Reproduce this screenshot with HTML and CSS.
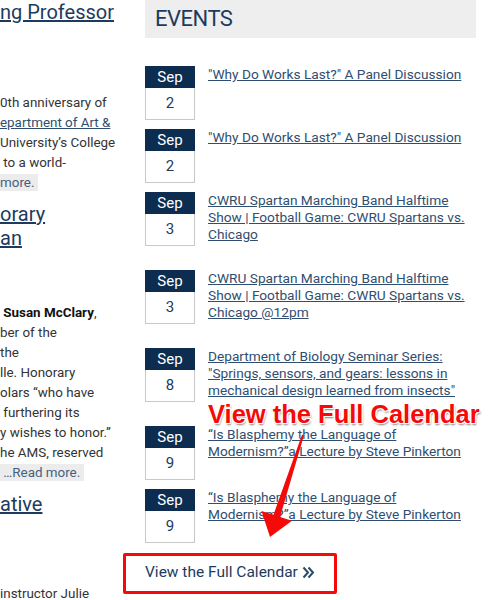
FILE: index.html
```html
<!DOCTYPE html>
<html lang="en">
<head>
    <meta charset="UTF-8">
    <meta name="viewport" content="width=device-width, initial-scale=1.0">
    <title>Events</title>
    <link rel="stylesheet" href="styles.css">
</head>
<body>
    <div class="page">
        <div class="news">
            <h2 class="news-title first"><a href="#">ng Professor</a></h2>
            <p class="news-text">
                0th anniversary of<br>
                <a href="#">epartment of Art &amp;</a><br>
                University’s College<br>
                &nbsp;to a world-<br>
                <a class="more" href="#">more.</a>
            </p>

            <h2 class="news-title"><a href="#">orary<br>an</a></h2>
            <p class="news-text second">
                &nbsp;<b>Susan McClary</b>,<br>
                ber of the<br>
                the<br>
                lle. Honorary<br>
                olars “who have<br>
                &nbsp;furthering its<br>
                y wishes to honor.”<br>
                he AMS, reserved<br>
                <a class="more" href="#">&nbsp;…Read more.</a>
            </p>

            <h2 class="news-title"><a href="#">ative</a></h2>
            <p class="news-text third">instructor Julie</p>
        </div>

        <div class="events">
            <h2 class="events-head">EVENTS</h2>
            <ul class="event-list">
                <li class="event">
                    <div class="date"><span class="month">Sep</span><span class="day">2</span></div>
                    <a class="event-title" href="#">"Why Do Works Last?" A Panel Discussion</a>
                </li>
                <li class="event">
                    <div class="date"><span class="month">Sep</span><span class="day">2</span></div>
                    <a class="event-title" href="#">"Why Do Works Last?" A Panel Discussion</a>
                </li>
                <li class="event">
                    <div class="date"><span class="month">Sep</span><span class="day">3</span></div>
                    <a class="event-title" href="#">CWRU Spartan Marching Band Halftime Show | Football Game: CWRU Spartans vs. Chicago</a>
                </li>
                <li class="event">
                    <div class="date"><span class="month">Sep</span><span class="day">3</span></div>
                    <a class="event-title" href="#">CWRU Spartan Marching Band Halftime Show | Football Game: CWRU Spartans vs. Chicago @12pm</a>
                </li>
                <li class="event">
                    <div class="date"><span class="month">Sep</span><span class="day">8</span></div>
                    <a class="event-title" href="#">Department of Biology Seminar Series: "Springs, sensors, and gears: lessons in mechanical design learned from insects"</a>
                </li>
                <li class="event">
                    <div class="date"><span class="month">Sep</span><span class="day">9</span></div>
                    <a class="event-title" href="#">“Is Blasphemy the Language of Modernism?”a Lecture by Steve Pinkerton</a>
                </li>
                <li class="event">
                    <div class="date"><span class="month">Sep</span><span class="day">9</span></div>
                    <a class="event-title" href="#">“Is Blasphemy the Language of Modernism?”a Lecture by Steve Pinkerton</a>
                </li>
            </ul>
            <a class="calendar-link" href="#">View the Full Calendar
                <svg class="chevrons" width="13" height="13" viewBox="0 0 13 13">
                    <path d="M1.5 1.5 L6 6.5 L1.5 11.5 M6.5 1.5 L11 6.5 L6.5 11.5" fill="none" stroke="#2b4a6c" stroke-width="2"/>
                </svg>
            </a>
        </div>

        <!-- screenshot annotation -->
        <div class="callout">View the Full Calendar</div>
        <svg class="arrow" width="70" height="120" viewBox="0 0 70 120">
            <polygon points="52,9.7 54,10.3 30.1,91.9 42,95.7 20,112 11.5,85.9 23.5,89.7" fill="#f50a0a"/>
        </svg>
        <div class="callout-box"></div>
    </div>
</body>
</html>
```

FILE: styles.css
```css
body {
    margin: 0;
    background: #fff;
    font-family: Roboto, "Open Sans", sans-serif;
    color: #333;
}

a {
    color: #2f4e70;
}

.page {
    position: relative;
    display: flex;
    gap: 28px;
    width: 498px;
    height: 600px;
    overflow: hidden;
}

/* left column (cut off by the screenshot) */
.news {
    width: 117px;
    flex-shrink: 0;
    overflow: hidden;
    white-space: nowrap;
}

.news-title {
    margin: 9px 0 0;
    font-size: 20px;
    font-weight: 400;
    line-height: 24px;
}

.news-title.first {
    margin-top: 0;
}

.news-title a {
    color: #1d3b5e;
}

.news-text {
    margin: 69px 0 0;
    font-size: 13.4px;
    line-height: 20px;
}

.news-text.second {
    margin-top: 53px;
}

.news-text.third {
    margin-top: 68px;
}

.news-text + .news-title {
    margin-top: 9px;
}

.news-text b {
    color: #111;
}

.more {
    background: #ececec;
    color: #44607e;
    text-decoration: none;
    padding: 1px 4px 1px 0;
}

/* events column */
.events {
    width: 331px;
    flex-shrink: 0;
}

.events-head {
    margin: 0 0 28px;
    height: 38px;
    padding-left: 10px;
    background: #eeeeee;
    font-size: 22px;
    font-weight: 400;
    line-height: 38px;
    letter-spacing: -0.5px;
    color: #1d3b5e;
}

.event-list {
    list-style: none;
    margin: 0;
    padding: 0;
}

.event {
    display: flex;
    align-items: flex-start;
    gap: 13px;
    margin-bottom: 9px;
}

.date {
    display: flex;
    flex-direction: column;
    width: 50px;
    flex-shrink: 0;
    text-align: center;
    font-size: 15px;
}

.month {
    height: 22px;
    line-height: 22px;
    background: #0c2d4f;
    color: #fff;
}

.day {
    height: 31px;
    line-height: 31px;
    border: 1px solid #c9c9c9;
    border-top: none;
    color: #1d3b5e;
}

.event-title {
    padding-bottom: 18px;
    font-size: 13.7px;
    line-height: 17px;
}

.calendar-link {
    display: flex;
    align-items: center;
    gap: 4px;
    height: 40px;
    font-size: 15.5px;
    color: #1d3b5e;
    text-decoration: none;
}

/* annotation drawn over the screenshot */
.callout {
    position: absolute;
    left: 208px;
    top: 400px;
    font-family: "Liberation Sans", Arial, sans-serif;
    font-size: 25.5px;
    font-weight: 700;
    color: #f50a0a;
    white-space: nowrap;
    text-shadow: -1px -1px 0 #fff, 1px -1px 0 #fff, -1px 1px 0 #fff, 1px 1px 0 #fff, 1px 2px 2px rgba(0, 0, 0, 0.5);
}

.arrow {
    position: absolute;
    left: 250px;
    top: 425px;
}

.callout-box {
    position: absolute;
    left: 123px;
    top: 553px;
    width: 208px;
    height: 35px;
    border: 3px solid #f50a0a;
    border-radius: 2px;
}
```
